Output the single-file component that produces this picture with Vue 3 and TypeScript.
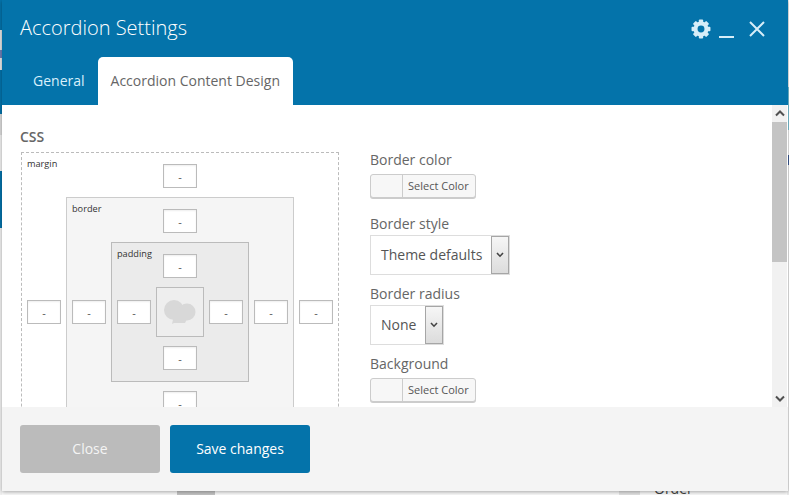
<template>
  <div class="page">
    <div class="edge">
      <i v-for="(s, i) in leftEdge" :key="i" :style="{ height: s.h + 'px', background: s.c }"></i>
    </div>
    <div class="behind">
      <div class="behind-row">
        <span class="behind-icon"></span>
        <span class="behind-thumb"></span>
        <span class="behind-text">Order</span>
      </div>
    </div>
    <div class="edge">
      <i v-for="(s, i) in rightEdge" :key="i" :style="{ height: s.h + 'px', background: s.c }"></i>
    </div>

    <div class="modal">
      <header class="head">
        <div class="head-top">
          <h1>Accordion Settings</h1>
          <div class="head-icons">
            <svg width="20" height="20" viewBox="0 0 22 22">
              <rect v-for="a in gearTeeth" :key="a" x="8.6" y="0.6" width="4.8" height="5" rx="1" fill="#d6edf8" :transform="`rotate(${a} 11 11)`" />
              <circle cx="11" cy="11" r="6" fill="none" stroke="#d6edf8" stroke-width="4.4" />
            </svg>
            <span class="min-icon"></span>
            <svg width="16" height="16" viewBox="0 0 16 16">
              <path d="M1 1L15 15M15 1L1 15" stroke="#d6edf8" stroke-width="2" fill="none" />
            </svg>
          </div>
        </div>
        <nav class="tabs">
          <a class="tab">General</a>
          <a class="tab active">Accordion Content Design</a>
        </nav>
      </header>

      <div class="main">
        <div class="body">
          <h2>CSS</h2>
          <div class="cols">
            <div class="box margin">
              <span class="box-label">margin</span>
              <input class="side top" value="-" />
              <input class="side left" value="-" />
              <div class="box border">
                <span class="box-label">border</span>
                <input class="side top" value="-" />
                <input class="side left" value="-" />
                <div class="box padding">
                  <span class="box-label">padding</span>
                  <input class="side top" value="-" />
                  <input class="side left" value="-" />
                  <div class="core">
                    <svg width="34" height="26" viewBox="0 0 34 26">
                      <circle cx="11" cy="11" r="10" fill="#d8d8d8" />
                      <circle cx="24" cy="13" r="8.5" fill="#d8d8d8" />
                      <path d="M11 16H26L22 24H11L9 25Z" fill="#d8d8d8" />
                    </svg>
                  </div>
                  <input class="side right" value="-" />
                  <input class="side bottom" value="-" />
                </div>
                <input class="side right" value="-" />
                <input class="side bottom" value="-" />
              </div>
              <input class="side right" value="-" />
              <input class="side bottom" value="-" />
            </div>

            <div class="fields">
              <div class="field wide">
                <label>Border color</label>
                <div class="color-btn"><span class="swatch"></span><span class="pick">Select Color</span></div>
              </div>
              <div class="field">
                <label>Border style</label>
                <div class="select theme">
                  <span class="select-value">Theme defaults</span>
                  <span class="select-arrow">
                    <svg width="8" height="6" viewBox="0 0 8 6"><path d="M1 1L4 4.2L7 1" fill="none" stroke="#444" stroke-width="1.6" /></svg>
                  </span>
                </div>
              </div>
              <div class="field">
                <label>Border radius</label>
                <div class="select none">
                  <span class="select-value">None</span>
                  <span class="select-arrow">
                    <svg width="8" height="6" viewBox="0 0 8 6"><path d="M1 1L4 4.2L7 1" fill="none" stroke="#444" stroke-width="1.6" /></svg>
                  </span>
                </div>
              </div>
              <div class="field">
                <label>Background</label>
                <div class="color-btn"><span class="swatch"></span><span class="pick">Select Color</span></div>
              </div>
            </div>
          </div>
        </div>

        <div class="scrollbar">
          <span class="arrow">
            <svg width="10" height="7" viewBox="0 0 10 7"><path d="M1 5.5L5 1.5L9 5.5" fill="none" stroke="#505050" stroke-width="2" /></svg>
          </span>
          <span class="thumb"></span>
          <span class="arrow low">
            <svg width="10" height="7" viewBox="0 0 10 7"><path d="M1 1.5L5 5.5L9 1.5" fill="none" stroke="#505050" stroke-width="2" /></svg>
          </span>
        </div>
      </div>

      <footer class="foot">
        <button class="btn close">Close</button>
        <button class="btn save">Save changes</button>
      </footer>
    </div>
  </div>
</template>

<script setup lang="ts">
const leftEdge = [
  { h: 30, c: '#0473aa' },
  { h: 20, c: '#e4e4e4' },
  { h: 8, c: '#6f7fb5' },
  { h: 12, c: '#e9e9e9' },
  { h: 44, c: '#0473aa' },
  { h: 21, c: '#dcdcdc' },
  { h: 36, c: '#f1f1f1' },
  { h: 57, c: '#0473aa' },
  { h: 267, c: '#f1f1f1' }
]

const rightEdge = [
  { h: 87, c: '#f1f1f1' },
  { h: 43, c: '#7cc4d8' },
  { h: 25, c: '#f1f1f1' },
  { h: 10, c: '#3c5a94' },
  { h: 330, c: '#ececec' }
]

const gearTeeth = [0, 45, 90, 135, 180, 225, 270, 315]
</script>

<style>
html, body { margin: 0; padding: 0; }
</style>

<style scoped>
.page {
  position: relative;
  display: flex;
  width: 789px;
  height: 495px;
  overflow: hidden;
  background: #fafafa;
  font-family: "Open Sans", sans-serif;
  color: #666;
}
.edge {
  display: flex;
  flex-direction: column;
  flex: none;
  width: 2px;
}
.edge:last-of-type { width: 1px; }
.edge i { display: block; }
.behind {
  flex: 1;
  display: flex;
  flex-direction: column;
  justify-content: flex-end;
}
.behind-row {
  display: flex;
  align-items: flex-end;
  height: 14px;
  padding-left: 175px;
}
.behind-icon {
  width: 38px;
  height: 4px;
  background: #c4c4c4;
}
.behind-thumb {
  width: 21px;
  height: 4px;
  margin-left: 404px;
  background: #e2e2e2;
}
.behind-text {
  margin-left: 14px;
  margin-bottom: -4px;
  font-size: 14px;
  line-height: 21px;
  color: #444;
}

.modal {
  position: absolute;
  left: 2px;
  top: 0;
  display: flex;
  flex-direction: column;
  width: 786px;
  height: 491px;
  background: #fff;
  box-shadow: 0 1px 4px rgba(0, 0, 0, 0.35);
}
.head {
  flex: none;
  height: 105px;
  background: #0473aa;
}
.head-top {
  display: flex;
  align-items: center;
  justify-content: space-between;
  height: 57px;
  padding: 0 23px 0 18px;
}
h1 {
  margin: 0 0 2px;
  font-size: 20px;
  font-weight: 300;
  line-height: 28px;
  color: #fff;
}
.head-icons {
  display: flex;
  align-items: center;
  gap: 8px;
}
.min-icon {
  width: 15px;
  height: 2px;
  margin: 16px 7px 0 0;
  background: #d6edf8;
}
.tabs {
  display: flex;
  padding-left: 18px;
}
.tab {
  height: 48px;
  padding: 0 13px;
  border-radius: 5px 5px 0 0;
  font-size: 14px;
  line-height: 48px;
  color: #d9f0fb;
}
.tab.active {
  background: #fff;
  color: #666;
}

.main {
  flex: 1;
  display: flex;
  min-height: 0;
}
.body {
  flex: 1;
  overflow: hidden;
  padding: 22px 0 0 18px;
}
h2 {
  margin: 0 0 5px;
  font-size: 14px;
  font-weight: 600;
  line-height: 20px;
}
.cols {
  display: flex;
  align-items: flex-start;
  gap: 31px;
  margin-left: 1px;
}

.box {
  display: grid;
  grid-template-columns: 34px auto 34px;
  grid-template-rows: auto auto auto;
  gap: 9px 5px;
  padding: 11px 5px;
  justify-items: center;
  align-items: center;
  flex: none;
}
.margin {
  border: 1px dashed #bbb;
  background: #fff;
}
.border {
  border: 1px solid #ccc;
  background: #f5f5f5;
}
.padding {
  border: 1px solid #bbb;
  background: #ebebeb;
}
.box-label {
  grid-column: 1;
  grid-row: 1;
  justify-self: start;
  align-self: start;
  margin-top: -6px;
  font-size: 9.2px;
  line-height: 12px;
  color: #333;
}
.side {
  box-sizing: border-box;
  width: 34px;
  height: 24px;
  padding: 0;
  border: 1px solid #bbb;
  background: #fff;
  box-shadow: inset 0 1px 2px rgba(0, 0, 0, 0.07);
  font-family: inherit;
  font-size: 11px;
  color: #555;
  text-align: center;
  outline: none;
}
.side.top { grid-column: 2; grid-row: 1; }
.side.left { grid-column: 1; grid-row: 2; }
.side.right { grid-column: 3; grid-row: 2; }
.side.bottom { grid-column: 2; grid-row: 3; }
.box > .box,
.core { grid-column: 2; grid-row: 2; }
.core {
  display: flex;
  align-items: center;
  justify-content: center;
  box-sizing: border-box;
  width: 48px;
  height: 50px;
  border: 1px solid #bbb;
  background: #eee;
}

.fields {
  display: flex;
  flex-direction: column;
  gap: 9px;
  margin-top: -2px;
}
.field.wide { margin-bottom: 7px; }
.field label {
  display: block;
  font-size: 14px;
  line-height: 20px;
}
.color-btn {
  display: flex;
  box-sizing: border-box;
  width: 106px;
  height: 24px;
  margin-top: 4px;
  border: 1px solid #ccc;
  border-radius: 3px;
  background: #f7f7f7;
  box-shadow: 0 1px 0 #ccc;
  font-size: 11px;
  line-height: 22px;
  color: #555;
}
.swatch {
  width: 31px;
  border-right: 1px solid #ccc;
}
.pick {
  padding-left: 5px;
}
.select {
  display: flex;
  align-items: stretch;
  justify-content: space-between;
  box-sizing: border-box;
  height: 40px;
  margin-top: 1px;
  border: 1px solid #ddd;
  background: #fff;
  font-size: 14px;
  line-height: 37px;
  color: #555;
}
.select.theme { width: 140px; }
.select.none { width: 74px; }
.select-value { padding-left: 10px; }
.select-arrow {
  display: flex;
  align-items: center;
  justify-content: center;
  box-sizing: border-box;
  width: 18px;
  border: 1px solid #a6a6a6;
  background: linear-gradient(#f6f6f6, #dcdcdc);
}

.scrollbar {
  display: flex;
  flex-direction: column;
  flex: none;
  width: 15px;
  margin-right: 1px;
  background: #f1f1f1;
}
.arrow {
  display: flex;
  align-items: center;
  justify-content: center;
  height: 17px;
  flex: none;
}
.arrow.low { margin-top: auto; }
.thumb {
  height: 140px;
  background: #c4c4c4;
}

.foot {
  flex: none;
  display: flex;
  gap: 10px;
  height: 84px;
  box-sizing: border-box;
  padding: 18px;
  background: #f4f4f4;
}
.btn {
  width: 140px;
  height: 48px;
  padding: 0 0 2px;
  border: 0;
  border-radius: 3px;
  font-family: inherit;
  font-size: 14px;
}
.close {
  background: #bbb;
  color: #f4f4f4;
}
.save {
  background: #0473aa;
  color: #fff;
}
</style>
